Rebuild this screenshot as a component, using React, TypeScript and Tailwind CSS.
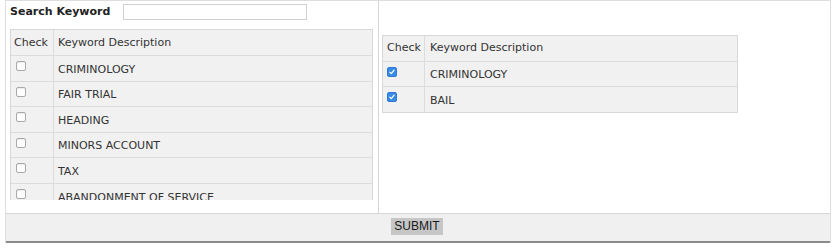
import React from "react";

const leftRows = [
  "CRIMINOLOGY",
  "FAIR TRIAL",
  "HEADING",
  "MINORS ACCOUNT",
  "TAX",
  "ABANDONMENT OF SERVICE",
];

const rightRows = ["CRIMINOLOGY", "BAIL"];

function Box({ checked }: { checked?: boolean }) {
  if (checked) {
    return (
      <span className="block w-[10px] h-[10px] rounded-[2px] bg-[#3a8be6] border border-[#2f7ad6]">
        <svg viewBox="0 0 10 10" className="w-full h-full block">
          <path d="M2.2 5.2 L4.1 7 L7.6 2.8" fill="none" stroke="#fff" strokeWidth="1.5" strokeLinecap="round" strokeLinejoin="round" />
        </svg>
      </span>
    );
  }
  return (
    <span className="block w-[10px] h-[10px] rounded-[2px] bg-white border border-[#a9a9a9] shadow-[inset_0_1px_1px_rgba(0,0,0,0.08)]" />
  );
}

export default function App() {
  return (
    <div
      className="w-[837px] h-[248px] bg-white pl-[5px] text-[#333]"
      style={{ fontFamily: '"DejaVu Sans", Verdana, sans-serif' }}
    >
      <div className="w-[826px] border-t border-l border-r border-[#dedede]">
        <div className="flex h-[212px]">
          {/* Left panel */}
          <div className="w-[373px] border-r border-[#d6d6d6] shrink-0">
            <div className="h-[28px] flex items-start pt-[3px]">
              <span className="font-bold text-[11px] leading-[16px] ml-[4px] text-[#222]">Search Keyword</span>
              <input
                type="text"
                className="ml-[13px] w-[184px] h-[16px] border border-[#d0d0d0] bg-white outline-none"
              />
            </div>
            <div className="ml-[4px] w-[363px] h-[171px] overflow-hidden">
              <div className="border border-[#d8d8d8] bg-[#f1f1f1] text-[11px]">
                <div className="flex h-[26px] border-b border-[#dcdcdc]">
                  <div className="w-[43px] border-r border-[#dcdcdc] pl-[3px] pt-[1px] flex items-center">Check</div>
                  <div className="pl-[4px] pt-[1px] flex items-center">Keyword Description</div>
                </div>
                {leftRows.map((r) => (
                  <div key={r} className="flex h-[25.6px] border-b border-[#dcdcdc]">
                    <div className="w-[43px] border-r border-[#dcdcdc] pl-[5px] pt-[5px]">
                      <Box />
                    </div>
                    <div className="pl-[4px] flex items-center pt-[3px]">{r}</div>
                  </div>
                ))}
              </div>
            </div>
          </div>
          {/* Right panel */}
          <div className="flex-1 pt-[34px] pl-[3px]">
            <div className="w-[356px] border border-[#d8d8d8] bg-[#f1f1f1] text-[11px]">
              <div className="flex h-[26px] border-b border-[#dcdcdc]">
                <div className="w-[42px] border-r border-[#dcdcdc] pl-[4px] flex items-center">Check</div>
                <div className="pl-[5px] flex items-center">Keyword Description</div>
              </div>
              {rightRows.map((r, i) => (
                <div
                  key={r}
                  className={`flex h-[25px] ${i < rightRows.length - 1 ? "border-b border-[#dcdcdc]" : ""}`}
                >
                  <div className="w-[42px] border-r border-[#dcdcdc] pl-[4px] pt-[5px]">
                    <Box checked />
                  </div>
                  <div className="pl-[5px] flex items-center pt-[3px]">{r}</div>
                </div>
              ))}
            </div>
          </div>
        </div>
        <div className="h-[30px] bg-[#f0f0f0] border-t border-[#d6d6d6] border-b-2 border-b-[#8a8a8a] flex justify-center items-start pt-[4px]">
          <button
            className="ml-[-2px] w-[52px] h-[17px] bg-[#c6c6c6] text-[12px] leading-[17px] text-[#1a1a1a]"
            style={{ fontFamily: '"Liberation Sans", Arial, sans-serif' }}
          >
            SUBMIT
          </button>
        </div>
      </div>
    </div>
  );
}
